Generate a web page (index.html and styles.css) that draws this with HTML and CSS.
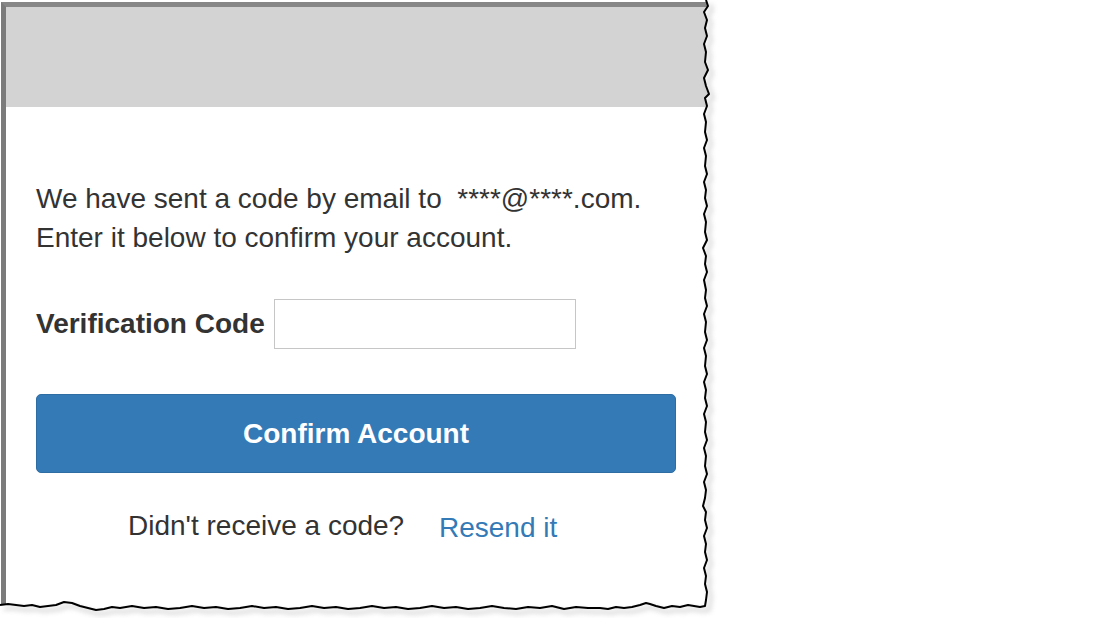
FILE: index.html
```html
<!DOCTYPE html>
<html lang="en">
<head>
<meta charset="utf-8">
<title>Confirm Account</title>
<link rel="stylesheet" href="styles.css">
</head>
<body>
<div class="page">
  <div class="card">
    <div class="card-header"></div>
    <div class="card-body">
      <p class="intro">We have sent a code by email to&nbsp; ****@****.com.<br>Enter it below to confirm your account.</p>
      <div class="field">
        <label class="field-label" for="code">Verification Code</label>
        <input class="field-input" id="code" type="text">
      </div>
      <button class="btn-primary" type="button">Confirm Account</button>
      <p class="resend">Didn't receive a code? <a class="resend-link" href="#">Resend it</a></p>
    </div>
  </div>
  <svg class="torn" width="1110" height="618" viewBox="0 0 1110 618" aria-hidden="true">
    <defs>
      <filter id="soft" x="-10%" y="-10%" width="120%" height="120%">
        <feGaussianBlur stdDeviation="2.5"/>
      </filter>
      <path id="edge" d="M706,0 L708,6 704,12 707,20 705,28 707,36 704,44 706,52 705,62 708,70 704,78 706,86 709,94 705,98 707,106 704,114 706,122 705,132 707,140 704,148 706,156 705,166 707,174 704,182 706,190 705,198 707,206 704,214 706,222 705,232 707,240 703,248 706,256 705,264 707,272 704,280 706,290 705,298 707,306 704,314 706,322 705,332 707,340 704,348 706,356 705,366 707,374 704,382 706,390 705,398 707,406 704,414 706,422 705,432 707,440 704,448 706,456 705,466 707,474 704,482 706,490 705,498 703,506 706,512 705,520 707,528 704,536 706,544 705,552 707,560 704,568 706,576 705,584 707,592 706,600 705,606 700,607 694,606 688,605 680,607 672,606 664,608 656,606 650,604 646,603 640,605 632,607 624,608 616,607 608,609 600,608 588,608 576,607 564,609 552,606 540,608 528,607 516,609 504,608 492,606 480,608 468,609 456,607 444,608 432,606 420,608 408,609 396,607 384,608 372,606 360,608 348,609 336,607 324,608 312,606 300,608 288,609 276,607 264,608 252,606 240,608 228,609 216,607 204,608 192,606 180,608 168,609 156,607 144,608 132,606 120,608 112,607 104,609 96,610 88,608 80,606 72,603 64,602 56,605 48,606 40,607 32,605 24,606 16,605 8,604 0,605"/>
    </defs>
    <path class="mask" d="M706,0 L708,6 704,12 707,20 705,28 707,36 704,44 706,52 705,62 708,70 704,78 706,86 709,94 705,98 707,106 704,114 706,122 705,132 707,140 704,148 706,156 705,166 707,174 704,182 706,190 705,198 707,206 704,214 706,222 705,232 707,240 703,248 706,256 705,264 707,272 704,280 706,290 705,298 707,306 704,314 706,322 705,332 707,340 704,348 706,356 705,366 707,374 704,382 706,390 705,398 707,406 704,414 706,422 705,432 707,440 704,448 706,456 705,466 707,474 704,482 706,490 705,498 703,506 706,512 705,520 707,528 704,536 706,544 705,552 707,560 704,568 706,576 705,584 707,592 706,600 705,606 700,607 694,606 688,605 680,607 672,606 664,608 656,606 650,604 646,603 640,605 632,607 624,608 616,607 608,609 600,608 588,608 576,607 564,609 552,606 540,608 528,607 516,609 504,608 492,606 480,608 468,609 456,607 444,608 432,606 420,608 408,609 396,607 384,608 372,606 360,608 348,609 336,607 324,608 312,606 300,608 288,609 276,607 264,608 252,606 240,608 228,609 216,607 204,608 192,606 180,608 168,609 156,607 144,608 132,606 120,608 112,607 104,609 96,610 88,608 80,606 72,603 64,602 56,605 48,606 40,607 32,605 24,606 16,605 8,604 0,605 L0,618 L1110,618 L1110,0 Z"/>
    <use class="shadow" href="#edge" transform="translate(4,4)" filter="url(#soft)"/>
    <use class="line" href="#edge"/>
  </svg>
</div>
</body>
</html>
```
FILE: styles.css
```css
html, body {
  margin: 0;
  padding: 0;
  background: #ffffff;
}

body {
  font-family: "Liberation Sans", Arial, Helvetica, sans-serif;
  color: #333333;
  width: 1110px;
  height: 618px;
  overflow: hidden;
}

.page {
  position: relative;
  width: 1110px;
  height: 618px;
  padding-top: 2px;
  box-sizing: border-box;
}

.card {
  width: 712px;
  height: 616px;
  margin-left: 1px;
  border-top: 5px solid #878787;
  border-left: 5px solid #7b7b7b;
  box-sizing: border-box;
  background: #ffffff;
  display: flex;
  flex-direction: column;
}

.card-header {
  height: 100px;
  background: #d3d3d3;
  flex: none;
}

.card-body {
  padding: 72px 0 0 30px;
  width: 640px;
}

.intro {
  margin: 0;
  font-size: 28px;
  line-height: 39px;
}

.field {
  display: flex;
  align-items: center;
  gap: 9px;
  margin-top: 42px;
}

.field-label {
  font-weight: bold;
  font-size: 28px;
  line-height: 32px;
}

.field-input {
  width: 302px;
  height: 50px;
  box-sizing: border-box;
  border: 1px solid #c6c6c6;
  border-radius: 0;
  background: #ffffff;
  margin: 0;
  padding: 0 10px;
  font: inherit;
  font-size: 20px;
}

.btn-primary {
  display: block;
  width: 640px;
  height: 79px;
  margin-top: 45px;
  border: 1px solid #2e6da4;
  border-radius: 5px;
  background: #337ab7;
  color: #ffffff;
  font-family: "Liberation Sans", Arial, Helvetica, sans-serif;
  font-weight: bold;
  font-size: 28px;
  padding: 0;
}

.resend {
  margin: 33px 0 0 0;
  padding-left: 92px;
  font-size: 28px;
  line-height: 39px;
}

.resend-link {
  color: #337ab7;
  text-decoration: none;
  margin-left: 27px;
  position: relative;
  top: 2px;
}

.torn {
  position: absolute;
  top: 0;
  left: 0;
  pointer-events: none;
}

.torn .mask {
  fill: #ffffff;
}

.torn .shadow {
  fill: none;
  stroke: #9a9a9a;
  stroke-width: 3;
  opacity: 0.45;
}

.torn .line {
  fill: none;
  stroke: #000000;
  stroke-width: 2;
  stroke-linejoin: round;
}
```
